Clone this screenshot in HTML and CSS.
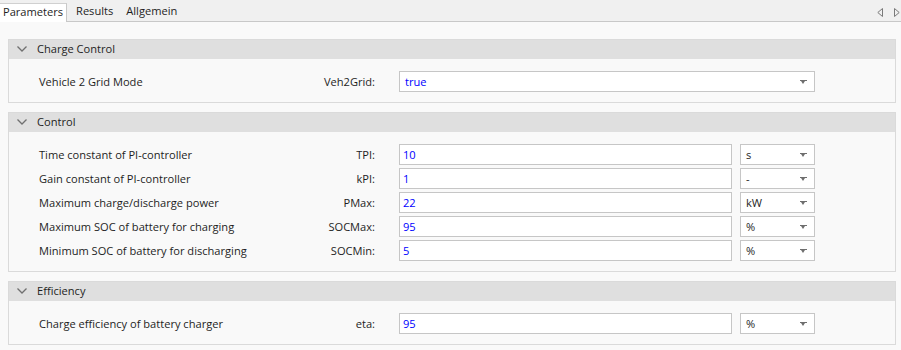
FILE: index.html
```html
<!DOCTYPE html>
<html lang="en">
<head>
    <meta charset="UTF-8">
    <title>Parameters</title>
    <link rel="stylesheet" href="styles.css">
</head>
<body>
    <div class="tab-bar">
        <div class="tab active">Parameters</div>
        <div class="tab">Results</div>
        <div class="tab">Allgemein</div>
        <div class="tab-scroll">
            <svg width="6" height="9" viewBox="0 0 6 9"><path d="M5.5 0.5 L0.8 4.5 L5.5 8.5 Z" fill="none" stroke="#7a7a7a" stroke-width="1"/></svg>
            <svg width="6" height="9" viewBox="0 0 6 9"><path d="M0.5 0.5 L5.2 4.5 L0.5 8.5 Z" fill="none" stroke="#7a7a7a" stroke-width="1"/></svg>
        </div>
    </div>

    <div class="content">
        <div class="section">
            <div class="section-header">
                <svg class="chevron" width="10" height="6" viewBox="0 0 10 6"><path d="M0.5 0.5 L5 5 L9.5 0.5" fill="none" stroke="#707070" stroke-width="1.3"/></svg>
                Charge Control
            </div>
            <div class="section-body">
                <div class="row">
                    <span class="desc">Vehicle 2 Grid Mode</span>
                    <span class="key">Veh2Grid:</span>
                    <div class="combo wide"><span class="value">true</span><span class="arrow"></span></div>
                </div>
            </div>
        </div>

        <div class="section">
            <div class="section-header">
                <svg class="chevron" width="10" height="6" viewBox="0 0 10 6"><path d="M0.5 0.5 L5 5 L9.5 0.5" fill="none" stroke="#707070" stroke-width="1.3"/></svg>
                Control
            </div>
            <div class="section-body">
                <div class="row">
                    <span class="desc">Time constant of PI-controller</span>
                    <span class="key">TPI:</span>
                    <div class="input">10</div>
                    <div class="combo unit"><span>s</span><span class="arrow"></span></div>
                </div>
                <div class="row">
                    <span class="desc">Gain constant of PI-controller</span>
                    <span class="key">kPI:</span>
                    <div class="input">1</div>
                    <div class="combo unit"><span>-</span><span class="arrow"></span></div>
                </div>
                <div class="row">
                    <span class="desc">Maximum charge/discharge power</span>
                    <span class="key">PMax:</span>
                    <div class="input">22</div>
                    <div class="combo unit"><span>kW</span><span class="arrow"></span></div>
                </div>
                <div class="row">
                    <span class="desc">Maximum SOC of battery for charging</span>
                    <span class="key">SOCMax:</span>
                    <div class="input">95</div>
                    <div class="combo unit"><span>%</span><span class="arrow"></span></div>
                </div>
                <div class="row">
                    <span class="desc">Minimum SOC of battery for discharging</span>
                    <span class="key">SOCMin:</span>
                    <div class="input">5</div>
                    <div class="combo unit"><span>%</span><span class="arrow"></span></div>
                </div>
            </div>
        </div>

        <div class="section">
            <div class="section-header">
                <svg class="chevron" width="10" height="6" viewBox="0 0 10 6"><path d="M0.5 0.5 L5 5 L9.5 0.5" fill="none" stroke="#707070" stroke-width="1.3"/></svg>
                Efficiency
            </div>
            <div class="section-body">
                <div class="row">
                    <span class="desc">Charge efficiency of battery charger</span>
                    <span class="key">eta:</span>
                    <div class="input">95</div>
                    <div class="combo unit"><span>%</span><span class="arrow"></span></div>
                </div>
            </div>
        </div>
    </div>
</body>
</html>
```

FILE: styles.css
```css
* {
    margin: 0;
    padding: 0;
    box-sizing: border-box;
}
body {
    width: 901px;
    height: 350px;
    overflow: hidden;
    background-color: #f9f9f9;
    font-family: "Open Sans", "Liberation Sans", sans-serif;
    font-size: 11.1px;
    color: #1e1e1e;
}
.tab-bar {
    display: flex;
    align-items: flex-end;
    height: 22px;
    background-color: #f0f0f0;
    border-bottom: 1px solid #c8c8c8;
    position: relative;
}
.tab {
    height: 18px;
    line-height: 16px;
    padding: 0 6px 0 7px;
}
.tab.active {
    height: 19px;
    margin-bottom: -1px;
    padding: 0 3px 0 3px;
    background-color: #ffffff;
    border-top: 1px solid #d0d0d0;
    border-right: 1px solid #c8c8c8;
    margin-right: 2px;
}
.tab-scroll {
    position: absolute;
    right: 1px;
    top: 8px;
    display: flex;
    gap: 11px;
}
.tab-scroll svg {
    display: block;
}
.content {
    display: flex;
    flex-direction: column;
    gap: 9px;
    padding: 17px 5px 0 8px;
}
.section {
    border: 1px solid #dadada;
    background-color: #f9f9f9;
}
.section-header {
    display: flex;
    align-items: center;
    height: 19px;
    line-height: 16px;
    background-color: #dfdfdf;
    padding: 0 0 2px 8px;
}
.chevron {
    margin: 1px 10px 0 0;
}
.section-body {
    display: flex;
    flex-direction: column;
    gap: 3px;
    padding: 12px 80px 10px 30px;
}
.row {
    display: grid;
    grid-template-columns: 1fr 90px 333px 75px;
    column-gap: 8px;
    height: 21px;
    line-height: 16px;
    align-items: center;
}
.key {
    text-align: right;
    padding-right: 16px;
}
.input, .combo {
    height: 21px;
    background-color: #ffffff;
    border: 1px solid #c6c6c6;
    display: flex;
    align-items: center;
}
.input {
    color: #0000ff;
    padding-left: 3px;
}
.combo {
    justify-content: space-between;
    padding: 0 7px 0 5px;
}
.combo.wide {
    grid-column: 3 / 5;
}
.combo .value {
    color: #0000ff;
}
.arrow {
    width: 7px;
    height: 4px;
    border-top: 1px solid #6e6e6e;
    position: relative;
}
.arrow::after {
    content: "";
    position: absolute;
    left: 1px;
    top: 0;
    border-left: 2.5px solid transparent;
    border-right: 2.5px solid transparent;
    border-top: 3px solid #6e6e6e;
}
```
